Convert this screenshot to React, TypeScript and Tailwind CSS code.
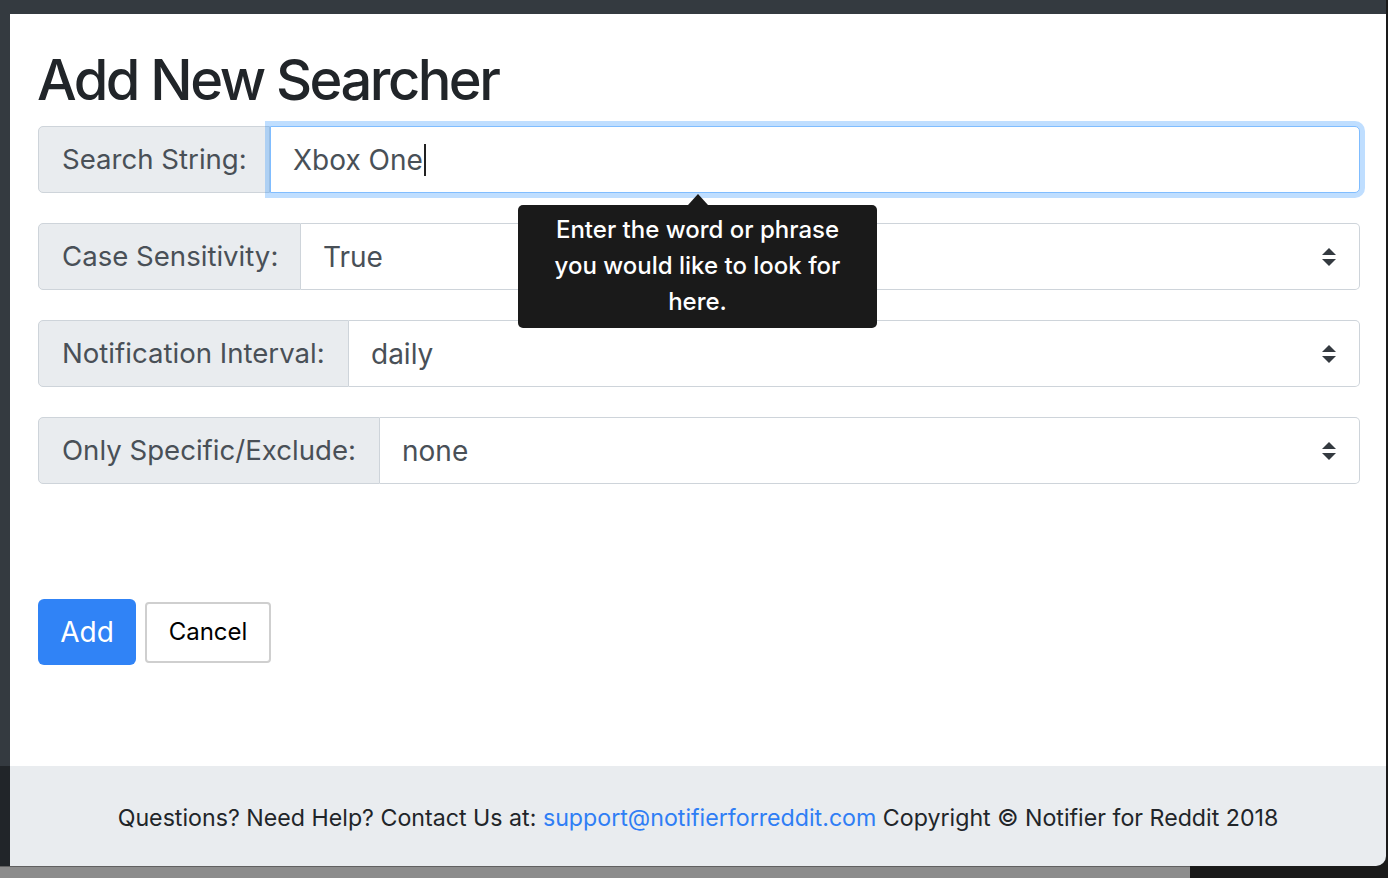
import React from "react"

const font = { fontFamily: "Inter, 'Liberation Sans', Arial, sans-serif" }

function SelectArrows() {
  return (
    <svg width="16" height="22" viewBox="0 0 16 22" className="shrink-0">
      <path d="M8 2 L15 9 L1 9 Z" fill="#343a40" />
      <path d="M1 13 L15 13 L8 20 Z" fill="#343a40" />
    </svg>
  )
}

function SelectRow({ label, value, labelWidth }: { label: string; value: string; labelWidth: string }) {
  return (
    <div className="flex h-[67px] w-full">
      <div
        className={`${labelWidth} shrink-0 flex items-center whitespace-nowrap px-[23px] bg-[#e9ecef] border border-[#ced4da] rounded-l-[5px] text-[27.6px] text-[#495057]`}
      >
        {label}
      </div>
      <div className="flex-1 flex items-center justify-between pl-[22px] pr-[22px] bg-white border border-l-0 border-[#ced4da] rounded-r-[5px] text-[28px] text-[#495057]">
        <span>{value}</span>
        <SelectArrows />
      </div>
    </div>
  )
}

export default function App() {
  return (
    <div className="w-[1388px] h-[878px] bg-[#1a1a1a] overflow-hidden flex flex-col" style={font}>
      <div className="w-[1386px] h-[866px] shrink-0 flex flex-col bg-[#343a40] rounded-br-[10px] overflow-hidden">
        <div className="h-[14px] shrink-0" />
        <div className="flex flex-1">
          <div className="w-[10px] shrink-0 flex flex-col">
            <div className="flex-1" />
            <div className="h-[100px] bg-[#212529]" />
          </div>
          <div className="flex-1 flex flex-col">
            <main className="relative flex-1 bg-white pt-[33px] pl-[28px] pr-[26px]">
              <h1 className="text-[56px] leading-[67px] font-medium tracking-[-0.045em] text-[#212529] mb-[12px] -ml-[1px]">
                Add New Searcher
              </h1>

              <div className="flex flex-col gap-[30px]">
                <div className="flex h-[67px] w-full">
                  <div className="w-[232px] shrink-0 flex items-center whitespace-nowrap px-[23px] bg-[#e9ecef] border border-[#ced4da] rounded-l-[5px] text-[27.6px] text-[#495057]">
                    Search String:
                  </div>
                  <div className="flex-1 flex items-center pl-[22px] bg-white border border-[#80bdff] rounded-r-[5px] shadow-[0_0_0_5px_rgba(0,123,255,0.25)] text-[28px] text-[#495057]">
                    <span>Xbox One</span>
                    <span className="inline-block w-[2px] h-[32px] bg-[#222] ml-[1px]" />
                  </div>
                </div>
                <SelectRow label="Case Sensitivity:" value="True" labelWidth="w-[263px]" />
                <SelectRow label="Notification Interval:" value="daily" labelWidth="w-[311px]" />
                <SelectRow label="Only Specific/Exclude:" value="none" labelWidth="w-[342px]" />
              </div>

              <div className="flex items-center gap-[9px] mt-[115px]">
                <button
                  type="button"
                  className="h-[66px] w-[98px] rounded-[6px] bg-[#3083f6] text-white text-[28px] flex items-center justify-center"
                >
                  Add
                </button>
                <button
                  type="button"
                  className="h-[61px] w-[126px] rounded-[4px] bg-white border-2 border-[#cfcfcf] text-black text-[24px] flex items-center justify-center"
                >
                  Cancel
                </button>
              </div>

              <div className="absolute left-[508px] top-[180px] w-[359px] flex flex-col items-center">
                <div className="w-0 h-0 border-l-[10px] border-r-[10px] border-b-[11px] border-l-transparent border-r-transparent border-b-[#1a1a1a]" />
                <div className="w-full rounded-[5px] bg-[#1a1a1a] pt-[7px] pb-[8px] px-[30px] text-center text-white text-[24px] leading-[36px] font-medium">
                  Enter the word or phrase you would like to look for here.
                </div>
              </div>
            </main>
            <footer className="h-[100px] shrink-0 bg-[#e9ecef] flex items-center justify-center text-[23.2px] text-[#212529] pt-[4px]">
              <span className="whitespace-nowrap">
                Questions? Need Help? Contact Us at:{" "}
                <a className="text-[#2f7ef5]">support@notifierforreddit.com</a> Copyright © Notifier for Reddit 2018
              </span>
            </footer>
          </div>
        </div>
      </div>
      <div className="flex flex-1">
        <div className="w-[1190px] bg-[#8c8c8c] border-t border-[#606060]" />
        <div className="flex-1" />
      </div>
    </div>
  )
}
